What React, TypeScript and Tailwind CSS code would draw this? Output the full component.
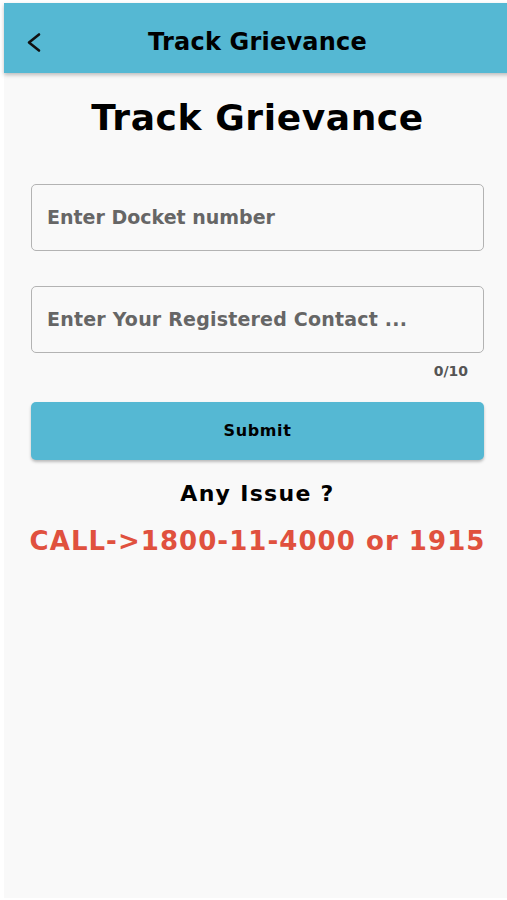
import React from "react";

export default function App() {
  return (
    <div className="w-[507px] h-[900px] bg-white overflow-hidden pl-[4px] pt-[3px] font-['DejaVu_Sans',sans-serif] font-bold">
      <div className="w-[507px] h-[895px] bg-[#f9f9f9] flex flex-col">
        <div className="relative h-[70px] bg-[#55b8d3] flex items-center justify-center pt-[7px] shadow-[0_2px_4px_rgba(0,0,0,0.25)] shrink-0">
          <svg
            className="absolute left-[22px] top-[29px]"
            width="16"
            height="21"
            viewBox="0 0 16 21"
            fill="none"
            stroke="#111"
            strokeWidth="2.6"
            strokeLinecap="round"
            strokeLinejoin="round"
          >
            <polyline points="13,2.5 3,10.5 13,18.5" />
          </svg>
          <span className="text-[24px] leading-none text-black tracking-[0.2px]">Track Grievance</span>
        </div>

        <div className="flex flex-col px-[27px]">
          <div className="mt-[24px] h-[42px] flex items-center justify-center text-[36px] leading-none text-black tracking-[0.6px]">
            Track Grievance
          </div>

          <div className="mt-[45px] h-[67px] border border-[#b3b3b3] rounded-[5px] flex items-center pl-[15px]">
            <span className="text-[19px] leading-none text-[#666]">Enter Docket number</span>
          </div>

          <div className="mt-[35px] h-[67px] border border-[#b3b3b3] rounded-[5px] flex items-center pl-[15px]">
            <span className="text-[19px] leading-none text-[#666] tracking-[0.2px]">Enter Your Registered Contact ...</span>
          </div>

          <div className="mt-[9px] h-[18px] flex items-center justify-end pr-[16px]">
            <span className="text-[14px] leading-none text-[#555]">0/10</span>
          </div>

          <div className="mt-[22px] h-[58px] bg-[#55b8d3] rounded-[5px] flex items-center justify-center shadow-[0_2px_3px_rgba(0,0,0,0.25)]">
            <span className="text-[16px] leading-none text-black tracking-[0.6px]">Submit</span>
          </div>

          <div className="mt-[20px] h-[28px] flex items-center justify-center">
            <span className="text-[22px] leading-none text-black tracking-[1.3px]">Any Issue ?</span>
          </div>

          <div className="mt-[16px] h-[34px] flex items-center justify-center">
            <span className="text-[26px] leading-none text-[#e0513e] tracking-[1.05px] whitespace-nowrap">CALL-&gt;1800-11-4000 or 1915</span>
          </div>
        </div>
      </div>
    </div>
  );
}
